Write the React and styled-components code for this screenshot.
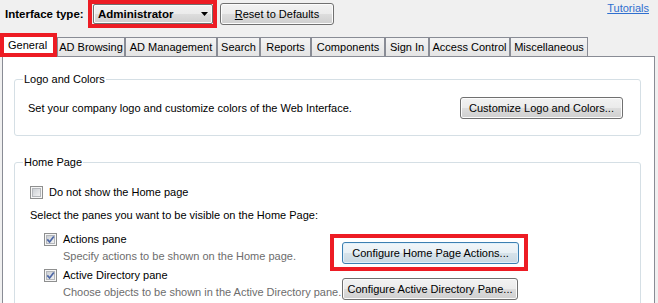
import styled, { createGlobalStyle } from "styled-components";

const GlobalStyle = createGlobalStyle`
  body {
    margin: 0;
    background: #f0f0f0;
    font-family: "Liberation Sans", Arial, sans-serif;
    font-size: 11px;
    color: #000;
    overflow: hidden;
  }
`;

const tabs = [
  { name: "General", w: 57 },
  { name: "AD Browsing", w: 68 },
  { name: "AD Management", w: 92 },
  { name: "Search", w: 43 },
  { name: "Reports", w: 51 },
  { name: "Components", w: 74 },
  { name: "Sign In", w: 44 },
  { name: "Access Control", w: 81 },
  { name: "Miscellaneous", w: 78 },
];

const TopBar = styled.div`
  display: flex;
  align-items: center;
  height: 28px;
  padding-left: 5px;
`;

const Label = styled.span`
  font-weight: bold;
  font-size: 11.5px;
  min-width: 83px;
`;

const RedBox = styled.div`
  border: 4px solid #ed1c24;
  padding-left: 1px;
  display: flex;
`;

const winGradient = `linear-gradient(#f2f2f2 0%, #ebebeb 50%, #dddddd 50%, #cfcfcf 100%)`;

const Select = styled.div`
  box-sizing: border-box;
  width: 120px;
  height: 20px;
  border: 1px solid #707070;
  border-radius: 2px;
  background: ${winGradient};
  box-shadow: inset 0 0 0 1px #fbfbfb;
  display: flex;
  align-items: center;
  justify-content: space-between;
  padding: 0 4px 0 4px;
  font-weight: bold;
  font-size: 11.5px;
`;

const Button = styled.button`
  box-sizing: border-box;
  width: ${(p) => p.$w}px;
  height: 22px;
  border: 1px solid ${(p) => (p.$default ? "#3c7fb1" : "#707070")};
  border-radius: 3px;
  background: ${(p) =>
    p.$default
      ? "linear-gradient(#f1f6f9 0%, #e8f0f5 50%, #d7e3ea 50%, #c9d9e3 100%)"
      : winGradient};
  box-shadow: inset 0 0 0 1px ${(p) => (p.$default ? "#dff0fb" : "#fcfcfc")};
  font-family: inherit;
  font-size: 11px;
  color: #000;
  padding: 0;
  flex-shrink: 0;
  margin-left: ${(p) => p.$ml || 0}px;
`;

const Tutorials = styled.a`
  margin-left: auto;
  margin-right: 9px;
  align-self: flex-start;
  margin-top: 2px;
  color: #2f6fcf;
  text-decoration: underline;
`;

const TabStrip = styled.div`
  display: flex;
  align-items: flex-end;
  height: 23px;
  margin-top: 5px;
`;

const Tab = styled.div`
  box-sizing: border-box;
  width: ${(p) => p.$w}px;
  display: flex;
  align-items: center;
  justify-content: center;
  ${(p) =>
    p.$active
      ? `
    height: 24px;
    margin-bottom: -1px;
    border: 4px solid #ed1c24;
    background: #fff;
    position: relative;
    z-index: 1;
    justify-content: flex-start;
    padding-left: 4px;
  `
      : `
    height: 19px;
    border: 1px solid #898c95;
    border-bottom: none;
    background: linear-gradient(#f4f4f4, #e4e4e4);
  `}
`;

const Panel = styled.div`
  margin: 0 3px 0 2px;
  height: 260px;
  background: #fff;
  border: 1px solid #898c95;
  padding: 16px 13px 0 11px;
`;

const Group = styled.fieldset`
  margin: ${(p) => p.$mt || 0}px 0 0 0;
  padding: ${(p) => p.$pad};
  border: 1px solid #d5dfe5;
  border-radius: 3px;
  min-width: 0;
`;

const Legend = styled.legend`
  padding: 0 1px;
  margin-left: ${(p) => p.$ml}px;
  line-height: 13px;
`;

const Row = styled.div`
  display: flex;
  align-items: center;
  justify-content: space-between;
`;

const CheckRow = styled.label`
  display: flex;
  align-items: center;
  gap: 6px;
  height: 16px;
`;

const Text = styled.div`
  line-height: 13px;
  margin-top: ${(p) => p.$mt || 0}px;
`;

const Options = styled.div`
  padding-left: 14px;
  margin-top: 9px;
  display: flex;
  flex-direction: column;
  gap: 4px;
`;

const Option = styled.div`
  display: flex;
  align-items: flex-end;
`;

const OptionText = styled.div`
  width: 298px;
`;

const Desc = styled.div`
  color: #6d6d6d;
  line-height: 14px;
  margin: 2px 0 0 19px;
  white-space: nowrap;
`;

const ButtonSlot = styled.div`
  margin-bottom: -1px;
  display: flex;
  position: relative;
`;

const Highlight = styled.span`
  position: relative;
  display: inline-flex;
  &::after {
    content: "";
    position: absolute;
    left: -12px;
    right: -9px;
    top: -8px;
    bottom: -7px;
    border: 4px solid #ed1c24;
    pointer-events: none;
  }
`;

function CheckBox({ checked }) {
  return (
    <svg width="13" height="13" viewBox="0 0 13 13">
      <defs>
        <linearGradient id="cbg" x1="0" y1="0" x2="1" y2="1">
          <stop offset="0" stopColor="#c9cdd2" />
          <stop offset="1" stopColor="#f4f4f4" />
        </linearGradient>
      </defs>
      <rect x="0.5" y="0.5" width="12" height="12" fill="#f6f6f6" stroke="#8e8f8f" />
      <rect x="2.5" y="2.5" width="8" height="8" fill="url(#cbg)" stroke="#b4b7bb" />
      {checked && (
        <path
          d="M3.3 6.4 L5.6 9 L9.8 3.4"
          fill="none"
          stroke="#4d67a6"
          strokeWidth="1.7"
        />
      )}
    </svg>
  );
}

function Arrow() {
  return (
    <svg width="7" height="4" viewBox="0 0 7 4">
      <path d="M0 0 H7 L3.5 4 Z" fill="#000" />
    </svg>
  );
}

export default function App() {
  return (
    <>
      <GlobalStyle />
      <TopBar>
        <Label>Interface type:</Label>
        <RedBox>
          <Select>
            <span>Administrator</span>
            <Arrow />
          </Select>
        </RedBox>
        <Button $w={114} $ml={3}>
          <u>R</u>eset to Defaults
        </Button>
        <Tutorials href="#">Tutorials</Tutorials>
      </TopBar>
      <TabStrip>
        {tabs.map((t, i) => (
          <Tab key={t.name} $w={t.w} $active={i === 0}>
            {t.name}
          </Tab>
        ))}
      </TabStrip>
      <Panel>
        <Group $pad="11px 17px 16px 13px">
          <Legend $ml={-5}>Logo and Colors</Legend>
          <Row>
            <span>Set your company logo and customize colors of the Web Interface.</span>
            <Button $w={163}>Customize Logo and Colors...</Button>
          </Row>
        </Group>
        <Group $mt={20} $pad="15px 0 40px 15px">
          <Legend $ml={-7}>Home Page</Legend>
          <CheckRow>
            <CheckBox />
            Do not show the Home page
          </CheckRow>
          <Text $mt={9}>Select the panes you want to be visible on the Home Page:</Text>
          <Options>
            <Option>
              <OptionText>
                <CheckRow>
                  <CheckBox checked />
                  Actions pane
                </CheckRow>
                <Desc>Specify actions to be shown on the Home page.</Desc>
              </OptionText>
              <ButtonSlot>
                <Highlight>
                  <Button $w={177} $default>
                    Configure Home Page Actions...
                  </Button>
                </Highlight>
              </ButtonSlot>
            </Option>
            <Option>
              <OptionText>
                <CheckRow>
                  <CheckBox checked />
                  Active Directory pane
                </CheckRow>
                <Desc>Choose objects to be shown in the Active Directory pane.</Desc>
              </OptionText>
              <ButtonSlot>
                <Button $w={176}>Configure Active Directory Pane...</Button>
              </ButtonSlot>
            </Option>
          </Options>
        </Group>
      </Panel>
    </>
  );
}
